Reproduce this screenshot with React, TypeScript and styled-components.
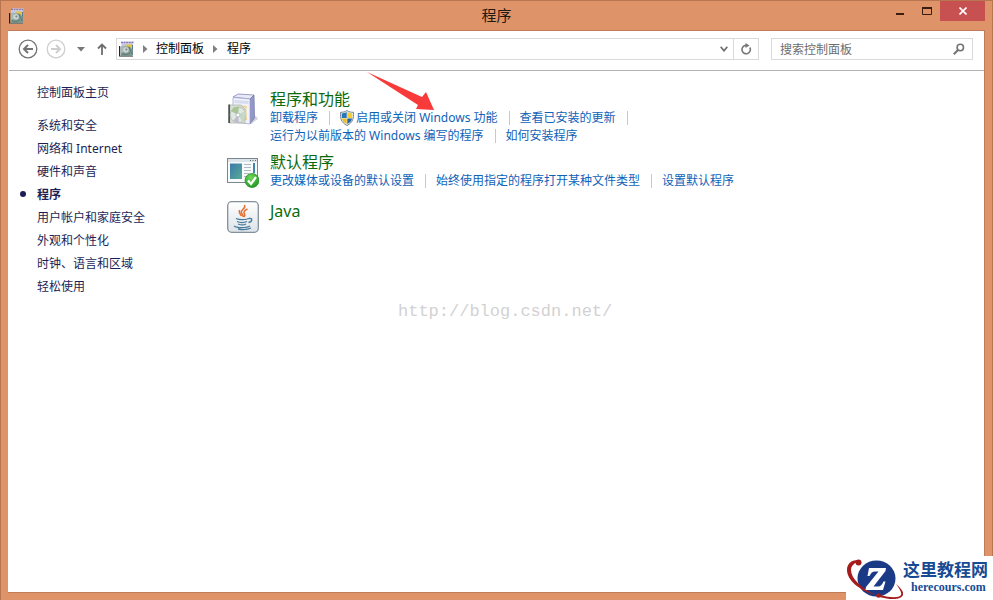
import React from "react";
import styled, { createGlobalStyle } from "styled-components";

const GlobalStyle = createGlobalStyle`
  * { box-sizing: border-box; }
  body {
    margin: 0;
    font-family: "Noto Sans", "Noto Sans CJK SC", sans-serif;
    font-size: 12px;
    color: #000;
  }
  button, input { font: inherit; }
  svg { display: block; flex: none; }
`;

const Window = styled.div`
  position: relative;
  display: flex;
  flex-direction: column;
  min-height: 100vh;
  padding: 0 7px 7px;
  background: #de9468;
  border: 1px solid #b87650;
  border-bottom-width: 0;
`;

const TitleBar = styled.header`
  display: grid;
  grid-template-columns: 1fr auto 1fr;
  height: 29px;
  flex: none;
`;

const AppIcon = styled.div`
  padding: 7px 1px;
`;

const WindowTitle = styled.h1`
  margin: 0;
  font-size: 15px;
  font-weight: 400;
  line-height: 29px;
  color: #241812;
`;

const Caption = styled.div`
  display: flex;
  justify-content: flex-end;
  align-items: flex-start;
`;

const CaptionButton = styled.button<{ $close?: boolean }>`
  display: flex;
  align-items: center;
  justify-content: center;
  width: ${(p) => (p.$close ? 45 : 27)}px;
  height: 20px;
  padding: 0;
  border: 0;
  background: ${(p) => (p.$close ? "#c75050" : "transparent")};
`;

const Client = styled.div`
  display: flex;
  flex-direction: column;
  flex: 1;
  background: #fff;
  border: 1px solid #c07c56;
  border-width: 1px 1px 1px 0;
`;

const Toolbar = styled.nav`
  display: flex;
  align-items: center;
  height: 40px;
  margin-left: 1px;
  padding: 0 11px 3px 9px;
  border-bottom: 1px solid #b2b2b2;
`;

const IconButton = styled.button<{ $w: number }>`
  display: flex;
  align-items: center;
  justify-content: center;
  flex: none;
  width: ${(p) => p.$w}px;
  height: 20px;
  padding: 0;
  border: 0;
  background: transparent;
`;

const Address = styled.div`
  display: flex;
  align-items: center;
  flex: 1;
  height: 22px;
  padding-left: 2px;
  border: 1px solid #d9d9d9;
`;

const Crumb = styled.a`
  color: #000;
  text-decoration: none;
  line-height: 20px;
`;

const Spacer = styled.div`
  flex: 1;
`;

const Refresh = styled.div`
  display: flex;
  border-left: 1px solid #d9d9d9;
`;

const Search = styled.label`
  display: flex;
  align-items: center;
  flex: none;
  width: 202px;
  height: 22px;
  margin-left: 12px;
  padding: 0 7px 0 8px;
  border: 1px solid #d9d9d9;
`;

const SearchInput = styled.input`
  flex: 1;
  min-width: 0;
  height: 20px;
  padding: 0;
  border: 0;
  outline: 0;
  background: transparent;
  &::placeholder { color: #6d6d6d; opacity: 1; }
`;

const Body = styled.div`
  display: flex;
  flex: 1;
`;

const Sidebar = styled.aside`
  flex: none;
  width: 219px;
  padding: 9px 0 0 12px;
`;

const SideList = styled.ul`
  margin: 10px 0 0;
  padding: 0;
  list-style: none;
`;

const SideLink = styled.a<{ $active?: boolean }>`
  display: flex;
  align-items: center;
  height: 23px;
  color: #1c1f55;
  text-decoration: none;
  font-weight: ${(p) => (p.$active ? 700 : 400)};
  &::before {
    content: "";
    width: 6px;
    height: 6px;
    margin-right: 11px;
    border-radius: 50%;
    background: ${(p) => (p.$active ? "#1c1f55" : "transparent")};
  }
`;

const Main = styled.main`
  display: flex;
  flex-direction: column;
  flex: 1;
  gap: 7px;
  padding: 18px 12px 12px 0;
`;

const Category = styled.section`
  display: flex;
  gap: 11px;
  min-height: 42px;
`;

const CategoryIcon = styled.div<{ $flush?: boolean }>`
  padding-top: ${(p) => (p.$flush ? 0 : 4)}px;
`;

const CategoryTitle = styled.h2`
  margin: 0;
  font-size: 16px;
  font-weight: 400;
  line-height: 20px;
  a { color: #0b6b0b; text-decoration: none; }
`;

const TaskRow = styled.div`
  display: flex;
  align-items: center;
  height: 18px;
`;

const TaskLink = styled.a`
  display: flex;
  align-items: center;
  gap: 2px;
  color: #0f62b8;
  line-height: 18px;
  text-decoration: none;
  white-space: nowrap;
`;

const Separator = styled.span`
  width: 1px;
  height: 14px;
  margin: 0 10px 0 11px;
  background: #c8c8c8;
`;

const Pointer = styled.svg`
  position: absolute;
  left: 364px;
  top: 70px;
  pointer-events: none;
`;

const Watermark = styled.div`
  position: absolute;
  left: 397px;
  top: 300px;
  font-family: "Liberation Mono", monospace;
  font-size: 17px;
  line-height: 22px;
  color: #d2d2d2;
`;

const SiteBadge = styled.div`
  position: absolute;
  right: -1px;
  bottom: 0;
  display: flex;
  align-items: center;
  width: 147px;
  height: 44px;
  background: #fff;
`;

const BadgeText = styled.div`
  color: #174a94;
  white-space: nowrap;
`;

const BadgeName = styled.div`
  font-family: "Noto Sans CJK SC", sans-serif;
  font-size: 17px;
  font-weight: 700;
  line-height: 18px;
`;

const BadgeUrl = styled.div`
  padding-left: 8px;
  font-family: "Liberation Serif", serif;
  font-size: 12px;
  font-weight: 700;
  line-height: 18px;
`;

function PanelIcon({ size }: { size: number }) {
  return (
    <svg width={size} height={size} viewBox="0 0 16 16" aria-hidden="true">
      <path d="M2 1.5 3.5.5H15L14 3v11H3z" fill="#d9dbe7" />
      <path d="M2 1.5h13" stroke="#8279bd" strokeWidth="1.4" strokeDasharray="2 .6" />
      <path d="M3 3h11v3H3z" fill="#bfc7df" />
      <path d="M7 3.5h6v6H9z" fill="#e8c33e" />
      <path d="M13.5 4v10" stroke="#5d7c8c" />
      <path d="M1.5 5.5h9l3 3V15h-12z" fill="#83978f" />
      <path d="M2 6h7l-4 5-3 1z" fill="#a9b8b1" />
      <circle cx="7" cy="9" r="2.8" fill="#c9d5d3" />
      <circle cx="7.4" cy="8.6" r="1" fill="#77808f" />
      <path d="M3 12.5c2 1.6 5 1.4 8-.5M10 6l3 7" stroke="#518072" fill="none" />
      <path d="M.6 5v10.5" stroke="#111" />
      <path d="M1 15.3h13" stroke="#66736d" />
    </svg>
  );
}

function ProgramsIcon() {
  return (
    <svg width="32" height="34" viewBox="0 0 32 34" aria-hidden="true">
      <path d="m24 31 7-5-2-3-5 2z" fill="#d4d4dc" />
      <path d="m6 4 5-3 16 1-4 4z" fill="#e8e9f8" stroke="#8589b5" strokeWidth=".8" />
      <path d="m23 6 4-4 .5 23-4.5 6z" fill="#9498c6" stroke="#777caf" strokeWidth=".8" />
      <path d="M6 4.5 23 6v25L6 29z" fill="#f1f2fb" stroke="#a5a9cf" strokeWidth=".8" />
      <path d="m7.500 7 14 1v3l-14-1z" fill="#d7dcf1" />
      <path d="m11 12 9 1v14l-9 2z" fill="#efd38e" />
      <path d="m15 14 5 .5v10l-5 2z" fill="#efe3c2" />
      <path d="M2 12h12l4 4v14H2z" fill="#d3dcd2" fillOpacity=".85" stroke="#b3bab6" strokeWidth=".8" />
      <path d="M2.200 11.500V30" stroke="#4e534e" strokeWidth="1.800" />
      <circle cx="11" cy="22" r="7.800" fill="#e1e8e4" stroke="#a9b5ad" strokeWidth=".7" />
      <path d="m11 22-7-4c2-4 5-5 8-4z" fill="#a9c597" />
      <path d="m11 22 7-4c2 4 0 8-3 10z" fill="#c6d9c8" />
      <path d="m11 22-5 6 6 2z" fill="#bdbdcd" />
      <circle cx="11" cy="22" r="2" fill="#fff" stroke="#abb0b2" strokeWidth=".8" />
    </svg>
  );
}

function DefaultsIcon() {
  return (
    <svg width="32" height="34" viewBox="0 0 32 34" aria-hidden="true">
      <defs>
        <linearGradient id="pane" x1="0" y1="0" x2="1" y2="1">
          <stop offset="0" stopColor="#3c78ac" />
          <stop offset="1" stopColor="#55ad91" />
        </linearGradient>
        <radialGradient id="tick" cx=".4" cy=".3" r=".8">
          <stop offset="0" stopColor="#73d95c" />
          <stop offset="1" stopColor="#16901b" />
        </radialGradient>
      </defs>
      <rect x=".5" y="2.500" width="30" height="24" fill="#f8fafb" stroke="#7b8790" />
      <path d="M1 3h29v3H1z" fill="#dde4ea" />
      <path d="M23 4.500h1m1.500 0h1m1.500 0h1" stroke="#536471" />
      <path d="M3 7.500h12V23H3z" fill="url(#pane)" />
      <path d="M17 8.500h7m-7 3h7m-7 3h7m-7 3h5m-5 3h4" stroke="#aeb9c3" />
      <path d="M27 7v10" stroke="#4285aa" strokeWidth="2" />
      <circle cx="25" cy="24.500" r="7" fill="url(#tick)" stroke="#1d8c22" strokeWidth=".7" />
      <path d="m21 24.500 3 3.500 5-7" fill="none" stroke="#fff" strokeWidth="2.200" />
    </svg>
  );
}

function JavaIcon() {
  return (
    <svg width="32" height="32" viewBox="0 0 32 32" aria-hidden="true">
      <defs>
        <linearGradient id="tile" x1="0" y1="0" x2="0" y2="1">
          <stop offset="0" stopColor="#fff" />
          <stop offset="1" stopColor="#dce3e9" />
        </linearGradient>
      </defs>
      <rect x=".7" y=".7" width="30.600" height="30.600" rx="4" fill="url(#tile)" stroke="#84909a" strokeWidth="1.300" />
      <path d="M17.500 4c2 4-5 5-3 8 .6 1.300 2 2 1.500 4M20.500 8c-3 1.500-4.500 3-3 5 .8 1.200.4 2-.5 3M12.500 9c-1.500 3 1 4 2 6" fill="none" stroke="#e36f31" strokeWidth="1.500" />
      <g fill="none" stroke="#49799b" strokeWidth="1.300">
        <path d="M9 17.500c3 1.300 9 1.300 13 0M22 17.500c4-1 3.500 3.500-.5 4M10 20.500c3 1.300 7 1.300 10 0M11 23c3 1.200 6 1.200 8 0M7 25c3 2.300 13 2 16 0M11 28c5 .9 10 .5 13-1" />
      </g>
    </svg>
  );
}

function Shield() {
  return (
    <svg width="14" height="16" viewBox="1 0 14 16" aria-hidden="true">
      <path d="M8 .5C6 2 4 2.300 1.500 2.300 1.200 8 2 12.500 8 15.500c6-3 6.800-7.500 6.500-13.200C12 2.300 10 2 8 .5z" fill="#e9eef1" stroke="#718592" />
      <path d="M7.700 2C6 3 4.500 3.400 2.700 3.500L2.900 8h4.800z" fill="#2874b8" />
      <path d="M8.300 2c1.700 1 3.200 1.400 5 1.500L13.100 8H8.300z" fill="#f4cc35" />
      <path d="M3 8.500h4.700V14C5 12.500 3.400 11 3 8.500z" fill="#f0bd24" />
      <path d="M13 8.500H8.300V14c2.700-1.500 4.300-3 4.700-5.500z" fill="#2465a8" />
    </svg>
  );
}

function Chevron() {
  return (
    <svg width="5" height="8" viewBox="0 0 5 8" aria-hidden="true">
      <path d="M0 0v8l4.500-4z" fill="#808080" />
    </svg>
  );
}

function RoundArrow({ forward }: { forward?: boolean }) {
  const color = forward ? "#cecece" : "#747474";
  return (
    <svg width="20" height="20" viewBox="0 0 20 20" aria-hidden="true">
      <circle cx="10" cy="10" r="8.800" fill="none" stroke={color} strokeWidth="1.300" />
      <path
        d={forward ? "M5 10h9M10 6l4 4-4 4" : "M15 10H6M10 6l-4 4 4 4"}
        fill="none"
        stroke={color}
        strokeWidth="2"
      />
    </svg>
  );
}

function BadgeLogo() {
  return (
    <svg width="57" height="44" viewBox="0 0 57 44" aria-hidden="true">
      <ellipse cx="30.500" cy="22.500" rx="19" ry="18" fill="#1b3a86" />
      <circle cx="12.500" cy="6.500" r="3" fill="#a51c1c" />
      <path d="M12 4C5 4 1 8 1 14c0 10 12 20 28 25C16 32 5 23 5 14c0-4 3-7 7-8z" fill="#a51c1c" />
      <path d="M50 28c5 4 8 8 7 11-2 5-12 5-24 2l1-2c11 3 19 3 21 0 1-2-1-6-5-11z" fill="#a51c1c" />
      <circle cx="32.500" cy="39.500" r="2.300" fill="#a51c1c" />
      <path d="M23 12h17l-.5 3-12 15.500h4.500c2.500 0 4-1.500 5.500-5h2L37 34H19.500l.5-3 12.500-15.500H29c-2.500 0-4 1.300-5.500 4.500h-2z" fill="#fff" />
    </svg>
  );
}

const sideItems = [
  "系统和安全",
  "网络和 Internet",
  "硬件和声音",
  "程序",
  "用户帐户和家庭安全",
  "外观和个性化",
  "时钟、语言和区域",
  "轻松使用",
];

type Task = { label: string; shield?: boolean; trailing?: boolean };
type CategoryData = { title: string; icon: React.ReactNode; rows: Task[][] };

const categories: CategoryData[] = [
  {
    title: "程序和功能",
    icon: <ProgramsIcon />,
    rows: [
      [
        { label: "卸载程序" },
        { label: "启用或关闭 Windows 功能", shield: true },
        { label: "查看已安装的更新", trailing: true },
      ],
      [{ label: "运行为以前版本的 Windows 编写的程序" }, { label: "如何安装程序" }],
    ],
  },
  {
    title: "默认程序",
    icon: <DefaultsIcon />,
    rows: [
      [
        { label: "更改媒体或设备的默认设置" },
        { label: "始终使用指定的程序打开某种文件类型" },
        { label: "设置默认程序" },
      ],
    ],
  },
  { title: "Java", icon: <JavaIcon />, rows: [] },
];

export default function App() {
  return (
    <>
      <GlobalStyle />
      <Window>
        <TitleBar>
          <AppIcon>
            <PanelIcon size={16} />
          </AppIcon>
          <WindowTitle>程序</WindowTitle>
          <Caption>
            <CaptionButton aria-label="最小化">
              <svg width="8" height="8" viewBox="0 0 8 8">
                <path d="M0 7h8" stroke="#3b1c10" strokeWidth="2" />
              </svg>
            </CaptionButton>
            <CaptionButton aria-label="最大化">
              <svg width="10" height="8" viewBox="0 0 10 8">
                <path d="M.5 1v6.500h9V1" fill="none" stroke="#3b1c10" />
                <path d="M0 1h10" stroke="#3b1c10" strokeWidth="2" />
              </svg>
            </CaptionButton>
            <CaptionButton $close aria-label="关闭">
              <svg width="8" height="8" viewBox="0 0 8 8">
                <path d="m.5.5 7 7m0-7-7 7" stroke="#fff" strokeWidth="1.600" />
              </svg>
            </CaptionButton>
          </Caption>
        </TitleBar>
        <Client>
          <Toolbar aria-label="导航">
            <IconButton $w={20} aria-label="后退">
              <RoundArrow />
            </IconButton>
            <IconButton $w={36} aria-label="前进">
              <RoundArrow forward />
            </IconButton>
            <IconButton $w={13} aria-label="最近的位置">
              <svg width="8" height="5" viewBox="0 0 8 5">
                <path d="M0 0h8L4 4.500z" fill="#777" />
              </svg>
            </IconButton>
            <IconButton $w={29} aria-label="向上">
              <svg width="10" height="12" viewBox="0 0 10 12">
                <path d="M5 12V1.500M1 5.500l4-4 4 4" fill="none" stroke="#6f6f6f" strokeWidth="1.800" />
              </svg>
            </IconButton>
            <Address>
              <PanelIcon size={16} />
              <IconButton $w={21} aria-label="展开">
                <Chevron />
              </IconButton>
              <Crumb href="#control-panel">控制面板</Crumb>
              <IconButton $w={23} aria-label="展开控制面板">
                <Chevron />
              </IconButton>
              <Crumb href="#programs">程序</Crumb>
              <Spacer />
              <IconButton $w={18} aria-label="以前的位置">
                <svg width="8" height="6" viewBox="0 0 8 6">
                  <path d="m.7.8 3.300 4 3.300-4" fill="none" stroke="#6f6f6f" strokeWidth="1.700" />
                </svg>
              </IconButton>
              <Refresh>
                <IconButton $w={24} aria-label="刷新">
                  <svg width="12" height="12" viewBox="0 0 12 12">
                    <path d="M9.800 4.500A4.200 4.200 0 1 1 6 2.400" fill="none" stroke="#777" strokeWidth="1.600" />
                    <path d="M5.500 0v5l4-2.500z" fill="#777" />
                  </svg>
                </IconButton>
              </Refresh>
            </Address>
            <Search>
              <SearchInput type="text" aria-label="搜索控制面板" placeholder="搜索控制面板" />
              <svg width="12" height="12" viewBox="0 0 12 12" aria-hidden="true">
                <circle cx="7.300" cy="4.500" r="3.200" fill="none" stroke="#747474" strokeWidth="1.600" />
                <path d="M5 7 .8 11.200" stroke="#747474" strokeWidth="2" />
              </svg>
            </Search>
          </Toolbar>
          <Body>
            <Sidebar>
              <SideLink href="#home">控制面板主页</SideLink>
              <SideList>
                {sideItems.map((item) => (
                  <li key={item}>
                    <SideLink href="#category" $active={item === "程序"}>
                      {item}
                    </SideLink>
                  </li>
                ))}
              </SideList>
            </Sidebar>
            <Main>
              {categories.map((category) => (
                <Category key={category.title}>
                  <CategoryIcon $flush={category.rows.length === 0}>{category.icon}</CategoryIcon>
                  <div>
                    <CategoryTitle>
                      <a href="#category">{category.title}</a>
                    </CategoryTitle>
                    {category.rows.map((row) => (
                      <TaskRow key={row[0].label}>
                        {row.map((task, index) => (
                          <React.Fragment key={task.label}>
                            {index > 0 && <Separator />}
                            <TaskLink href="#task">
                              {task.shield && <Shield />}
                              {task.label}
                            </TaskLink>
                            {task.trailing && <Separator />}
                          </React.Fragment>
                        ))}
                      </TaskRow>
                    ))}
                  </div>
                </Category>
              ))}
            </Main>
          </Body>
        </Client>
        <Pointer width="72" height="42" viewBox="0 0 72 42" aria-hidden="true">
          <path d="M2 1 57 26l4-5 8 18-18-1 2-4z" fill="#f83a3a" />
        </Pointer>
        <Watermark>http://blog.csdn.net/</Watermark>
        <SiteBadge>
          <BadgeLogo />
          <BadgeText>
            <BadgeName>这里教程网</BadgeName>
            <BadgeUrl>herecours.com</BadgeUrl>
          </BadgeText>
        </SiteBadge>
      </Window>
    </>
  );
}
